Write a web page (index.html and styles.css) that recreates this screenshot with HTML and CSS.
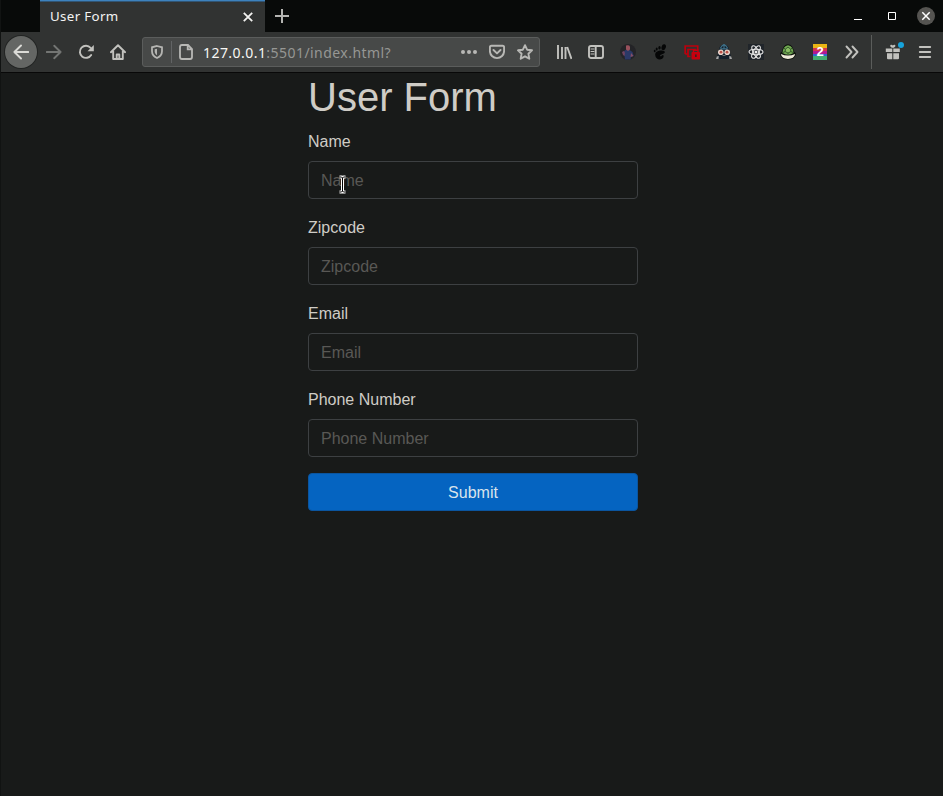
FILE: index.html
```
<!DOCTYPE html>
<html lang="en">
<head>
<meta charset="utf-8">
<title>User Form</title>
<link rel="stylesheet" href="styles.css">
</head>
<body>
<div class="browser">
  <header class="tabs">
    <div class="tab">
      <span class="tab-title">User Form</span>
      <svg class="tab-close" width="10" height="10" viewBox="0 0 10 10"><path d="M.8.8 9.2 9.2M9.2.8.8 9.2" stroke="#f2f2f0" stroke-width="1.8"/></svg>
    </div>
    <svg class="new-tab" width="14" height="14" viewBox="0 0 14 14"><path d="M7 0v14M0 7h14" stroke="#b4b4b1" stroke-width="2"/></svg>
    <div class="window-controls">
      <svg width="8" height="10" viewBox="0 0 8 10"><path d="M0 6.500h8" stroke="#fff"/></svg>
      <svg width="8" height="8" viewBox="0 0 8 8"><path d="M.5.5h7v7h-7z" fill="none" stroke="#fff"/></svg>
      <svg width="18" height="18" viewBox="0 0 18 18"><circle cx="9" cy="9" r="9" fill="#555451"/><path d="m5.300 5.300 7.400 7.400m0-7.400-7.400 7.400" stroke="#fff" stroke-width="1.500"/></svg>
    </div>
  </header>
  <nav class="toolbar">
    <span class="back"><svg class="icon line" viewBox="0 0 16 16"><path d="M15.300 8H1.400M8 1.500 1.400 8 8 14.500"/></svg></span>
    <span class="cell dim"><svg class="icon line" viewBox="0 0 16 16"><path d="M.7 8h13.900M8.200 1.800 14.600 8l-6.400 6.200"/></svg></span>
    <span class="cell"><svg class="icon line" viewBox="0 0 16 16"><path d="M13.200 11A6.100 6.100 0 1 1 12.600 3.800"/><path class="solid" d="M15.800 1v6.200H9.500z"/></svg></span>
    <span class="cell"><svg class="icon line" viewBox="0 0 16 16"><path d="M.9 8.200 8 1.200l7.100 7M3.200 7v8h9.600V7M6.700 15v-4.500h2.600V15"/></svg></span>
    <div class="address">
      <svg class="shield" width="12" height="14" viewBox="0 0 12 14"><path d="M6 1 11 2.300v4c0 3.200-1.800 5.300-5 6.700C2.800 11.600 1 9.500 1 6.300v-4z" fill="none" stroke="#b5b5b2" stroke-width="1.800"/><path d="M6 3.700v6.500C4.500 9.300 3.700 8 3.700 6.300v-2z" fill="#b5b5b2"/></svg>
      <span class="address-line"></span>
      <svg class="page" width="14" height="16" viewBox="0 0 14 16"><path d="M3 1h6l4 4v8q0 2-2 2H3q-2 0-2-2V3q0-2 2-2zM8.700 1v4.300H13" fill="none" stroke="#b8b8b5" stroke-width="1.800"/></svg>
      <span class="url"><b>127.0.0.1</b>:5501/index.html?</span>
      <span class="actions">
        <svg class="icon" viewBox="0 0 16 16"><circle cx="2" cy="8" r="2"/><circle cx="8" cy="8" r="2"/><circle cx="14" cy="8" r="2"/></svg>
        <svg class="icon line" viewBox="0 0 16 16"><path d="M2.300 1.800h11.400q1.400 0 1.400 1.400V7a7.100 7.100 0 0 1-14.200 0V3.200q0-1.400 1.400-1.400zM4.500 6 8 9.400 11.500 6"/></svg>
        <svg class="icon line" viewBox="0 0 16 16"><path d="m8 1.200 2.100 4.500 4.900.6-3.600 3.400.9 5L8 12.300l-4.300 2.400.9-5L1 6.300l4.900-.6z"/></svg>
      </span>
    </div>
    <span class="cell"><svg class="icon library" viewBox="0 0 16 16"><path d="M2 1v14M6 3v12M9.500 3v12M11.200 3l4.300 12"/></svg></span>
    <span class="cell"><svg class="icon line" viewBox="0 0 16 16"><rect x="1" y="2" width="14" height="12" rx="2"/><path d="M7.700 2v12"/><path d="M3 5h3M3 7.500h3M3 10h3" stroke-width="1"/></svg></span>
    <span class="cell"><svg class="icon" viewBox="0 0 16 16"><circle cx="8" cy="8" r="8" fill="#242427"/><path d="M2.500 8.500 5.500 6h4l3 2 1.200 4-2.700 1-.5 2.500H5L4.500 12z" fill="#2b3967"/><path d="m2 8 2-1 1 2-.5 3-1.500-1z" fill="#70425f"/><path d="M6 1.500q3-1 4 1v3L8 7 6 5.500z" fill="#98515c"/><path d="m11 9 2.500 3-3 1z" fill="#864e66"/></svg></span>
    <span class="cell"><svg class="icon foot" viewBox="0 0 16 16"><ellipse cx="11.700" cy="3.200" rx="2.100" ry="3" transform="rotate(18 11.700 3.200)"/><ellipse cx="7.500" cy="3.800" rx="1.200" ry="1.700"/><ellipse cx="4.700" cy="5.100" rx="1" ry="1.500"/><ellipse cx="2.700" cy="7" rx=".9" ry="1.200"/><path d="M10.700 6.700C6.500 6.200 3 8 3.200 11c.2 3 2.300 4.600 4.800 4.500 2.400-.1 4-2 3.600-3.900-.3-1-1.400-.8-1.800-.1-.5 1-1.600 1.200-1.700.2-.1-1.200 4.700-1.600 4.800-3.600 0-.8-1-1.300-2.200-1.400z"/></svg></span>
    <span class="cell"><svg class="icon" viewBox="0 0 16 16"><path d="M1.200 10V2h12.500v4M1.200 10H4M6.500 12.500H4V5.500h7V7" fill="none" stroke="#bd000d" stroke-width="1.700"/><rect x="7.500" y="8" width="8.500" height="7.500" rx="1" fill="#c6000e"/><path d="M9.500 8.500V6.200h4.500v2.300" fill="none" stroke="#c6000e" stroke-width="1.400"/><path d="M11 10.500h1.700v2.500H11z" fill="#3b2022"/></svg></span>
    <span class="cell"><svg class="icon" viewBox="0 0 16 16"><path d="M3 6q0-5 5-5.500Q13 1 13 6l2.800 9H.2z" fill="#15202b"/><path d="M4.200 4.500 6 2l2-1.500L10 2l1.800 2.500M8 1v4M5 4.800h6" stroke="#3f7189" stroke-width="1.200" fill="none"/><circle cx="4.800" cy="8.200" r="2.800" fill="#ead5cb"/><circle cx="11.200" cy="8.200" r="2.800" fill="#ead5cb"/><circle cx="5" cy="8.200" r="1.400" fill="#bb5148"/><circle cx="11" cy="8.200" r="1.400" fill="#bb5148"/><path d="m.8 12.500 2-.5L2.500 15H0zm12.400-.5 2 .5.8 2.500h-2.500z" fill="#a7a7a6"/><path d="M6.500 11h3v1h-3z" fill="#777"/></svg></span>
    <span class="cell"><svg class="icon" viewBox="0 0 16 16"><path d="M0 0h16v16H0z" fill="#20252a"/><g fill="none" stroke="#e4e4e4" stroke-width="1.100"><ellipse cx="8" cy="8" rx="7" ry="2.700"/><ellipse cx="8" cy="8" rx="7" ry="2.700" transform="rotate(60 8 8)"/><ellipse cx="8" cy="8" rx="7" ry="2.700" transform="rotate(120 8 8)"/></g><circle cx="8" cy="8" r="1.500" fill="#eee"/></svg></span>
    <span class="cell"><svg class="icon" viewBox="0 0 16 16"><path d="M0 10q.5-2 2-2.500C2.500 3.500 5 .3 8 .3s5.500 3.200 6 7.200q1.500.5 2 2.500-.7 5.700-8 5.700T0 10z" fill="#0d120c"/><path d="M.8 10q7.200 3 14.400 0-1 4.900-7.200 4.900T.8 10z" fill="#eeead8"/><path d="M2.500 9Q3 1.700 8 1.200 13 1.700 13.500 9q-5.500 3.400-11 0z" fill="#70a951"/><path d="m5.300 5.200 2.700-2 2.700 2v2.500L8 9 5.300 7.700zM2.800 8.500l2.500-1M13.200 8.500l-2.500-1M8 9v1.500M5.300 5.200 4 4M10.700 5.200 12 4" fill="#89bd62" stroke="#284722" stroke-width=".8"/></svg></span>
    <span class="cell"><span class="badge-two">2</span></span>
    <span class="cell"><svg class="icon line" viewBox="0 0 16 16"><path d="m2.500 2.500 5 5.500-5 5.500M8.500 2.500l5 5.500-5 5.500"/></svg></span>
    <span class="divider"></span>
    <span class="cell gift"><svg class="icon" viewBox="0 0 16 16"><path d="M.8 4.500h6.500V8H.8zM8.300 4.500h6.500V8H8.300zM2 9.200h5.300v6H3q-1 0-1-1zM8.300 9.200H14v5q0 1-1 1H8.300zM5.300 1q1.400-.8 2.500.5Q9 .2 10.300 1q.7 1.500-1.500 2.700h-2Q4.600 2.500 5.300 1z"/></svg><i></i></span>
    <span class="cell menu"><svg class="icon line" viewBox="0 0 16 16"><path d="M2.800 3h10.400M2.800 8h10.400M2.800 13h10.400"/></svg></span>
  </nav>
  <main>
    <form class="user-form">
      <h1>User Form</h1>
      <div class="group"><label for="name">Name</label><input id="name" placeholder="Name"><svg class="cursor" width="9" height="19" viewBox="0 0 9 19"><path d="M1.500 2h2l1 1 1-1h2M4.500 3v13M1.500 17h2l1-1 1 1h2" fill="none" stroke="#fff" stroke-width="3"/><path d="M1.500 2h2l1 1 1-1h2M4.500 3v13M1.500 17h2l1-1 1 1h2" fill="none" stroke="#000" stroke-width="1"/></svg></div>
      <div class="group"><label for="zip">Zipcode</label><input id="zip" placeholder="Zipcode"></div>
      <div class="group"><label for="email">Email</label><input id="email" placeholder="Email"></div>
      <div class="group"><label for="phone">Phone Number</label><input id="phone" placeholder="Phone Number"></div>
      <button type="button">Submit</button>
    </form>
  </main>
</div>
</body>
</html>
```
FILE: styles.css
```
* { box-sizing: border-box; }
body { margin: 0; background: #181a19; color: #cfccc6; font: 16px/24px "Liberation Sans", Arial, sans-serif; }
svg { display: block; flex: none; }
.browser { height: 796px; overflow: hidden; border-left: 1px solid #111312; }
.tabs { height: 32px; background: #080a09; display: flex; align-items: center; padding-left: 39px; }
.tab { width: 225px; height: 32px; background: #313332; border-top: 1px solid #3d82bd; display: flex; align-items: center; justify-content: space-between; padding: 0 12px 0 10px; box-shadow: inset 0 1px #315574; }
.tab-title { font: 13.300px/20px "Noto Sans", sans-serif; letter-spacing: .35px; color: #f4f4f2; padding-bottom: 2px; }
.new-tab { margin: -1px 0 0 10px; }
.window-controls { margin-left: auto; margin-right: 8px; display: flex; align-items: center; }
.window-controls svg:nth-child(1) { margin: 4px 26px 0 0; }
.window-controls svg:nth-child(2) { margin-right: 21px; }
.toolbar { height: 41px; background: #313332; border-bottom: 1px solid #080808; display: flex; align-items: center; padding-left: 4px; color: #c2c2be; }
.back { width: 32px; height: 32px; border-radius: 50%; background: #646664; box-shadow: 0 0 0 1px #222423; display: flex; align-items: center; justify-content: center; margin-right: 1px; color: #dbdbd7; }
.cell { width: 32px; height: 32px; flex: none; display: flex; align-items: center; justify-content: center; }
.dim { color: #737573; }
.icon { width: 16px; height: 16px; fill: currentColor; }
.line { fill: none; stroke: currentColor; stroke-width: 1.9; stroke-linecap: round; stroke-linejoin: round; }
.library { fill: none; stroke: currentColor; stroke-width: 1.9; }
.solid { fill: currentColor; stroke: none; }
.foot { fill: #050606; }
.address { width: 398px; height: 30px; margin: 0 8px; background: #474948; border: 1px solid #5b5d5c; border-radius: 3px; display: flex; align-items: center; padding: 0 6px 0 8px; color: #b8b8b5; }
.address-line { width: 1px; height: 22px; background: #626465; margin: 0 7px 0 8px; }
.url { font: 14px/20px "Noto Sans", sans-serif; letter-spacing: .45px; color: #969794; margin: 0 0 0 10px; white-space: nowrap; padding-top: 1px; }
.url b { font-weight: 400; color: #f7f7f4; }
.actions { display: flex; gap: 12px; margin-left: auto; }
.badge-two { width: 14px; height: 16px; background: linear-gradient(#e9b514 0 24%, #d3344b 24% 44%, #b31893 44% 60%, #3268ce 60% 76%, #43ad70 76%); color: #fff; font: bold 13px/16px "Liberation Sans", sans-serif; text-align: center; }
.divider { width: 1px; height: 34px; margin: 0 6px 0 3px; background: #5b5d5b; }
.gift { position: relative; padding-right: 2px; }
.gift i { position: absolute; left: 20px; top: 6px; width: 6px; height: 6px; border-radius: 50%; background: #16a4dc; }
.menu { margin-left: -1px; }
main { display: flex; padding-left: 307px; }
.user-form { width: 330px; }
h1 { margin: 0 0 8px; font-size: 40px; line-height: 48px; font-weight: 400; }
.group { position: relative; margin-bottom: 16px; }
label { display: block; height: 24px; margin-bottom: 8px; padding-top: 1px; }
input { display: block; width: 100%; height: 38px; padding: 8px 12px 6px; background: #181a19; border: 1px solid #3d4042; border-radius: 4px; font: inherit; color: #cfccc6; }
input::placeholder { color: #595855; opacity: 1; }
.cursor { position: absolute; left: 30px; top: 46px; }
button { display: block; width: 100%; height: 38px; padding: 2px 0 0; background: #0564c1; border: 1px solid #0b559f; border-radius: 4px; color: #d8e3ec; font: inherit; }
```
